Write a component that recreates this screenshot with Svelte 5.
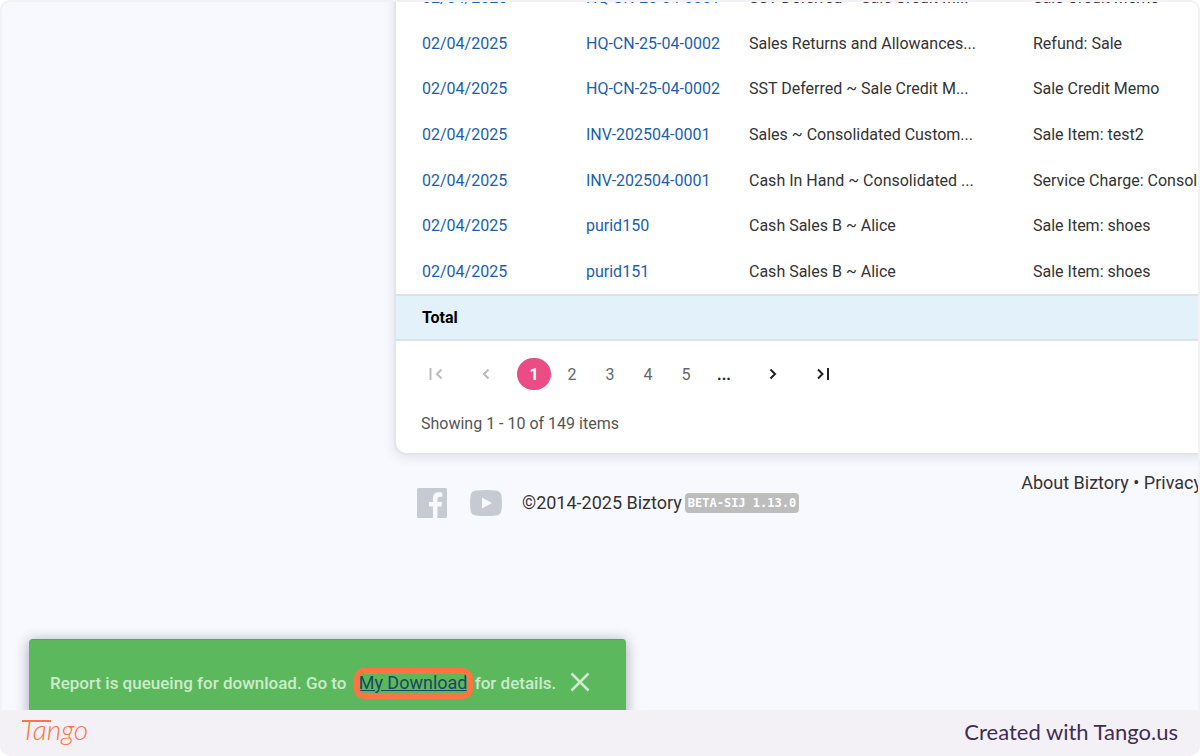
<script>
  const rows = [
    { date: '02/04/2025', ref: 'HQ-CN-25-04-0001', account: 'SST Deferred ~ Sale Credit M...', details: 'Sale Credit Memo' },
    { date: '02/04/2025', ref: 'HQ-CN-25-04-0002', account: 'Sales Returns and Allowances...', details: 'Refund: Sale' },
    { date: '02/04/2025', ref: 'HQ-CN-25-04-0002', account: 'SST Deferred ~ Sale Credit M...', details: 'Sale Credit Memo' },
    { date: '02/04/2025', ref: 'INV-202504-0001', account: 'Sales ~ Consolidated Custom...', details: 'Sale Item: test2' },
    { date: '02/04/2025', ref: 'INV-202504-0001', account: 'Cash In Hand ~ Consolidated ...', details: 'Service Charge: Consolidated' },
    { date: '02/04/2025', ref: 'purid150', account: 'Cash Sales B ~ Alice', details: 'Sale Item: shoes' },
    { date: '02/04/2025', ref: 'purid151', account: 'Cash Sales B ~ Alice', details: 'Sale Item: shoes' },
  ]

  const pages = [1, 2, 3, 4, 5]
  let currentPage = $state(1)
  let showToast = $state(true)
</script>

<div class="frame">
  <div class="capture">
    <main>
      <section class="card">
        <table>
          <colgroup>
            <col class="col-date">
            <col class="col-ref">
            <col class="col-account">
            <col>
          </colgroup>
          <tbody>
            {#each rows as row}
              <tr>
                <td><a href="#date">{row.date}</a></td>
                <td><a href="#ref">{row.ref}</a></td>
                <td>{row.account}</td>
                <td>{row.details}</td>
              </tr>
            {/each}
          </tbody>
          <tfoot>
            <tr><td colspan="4">Total</td></tr>
          </tfoot>
        </table>

        <nav class="pager" aria-label="Pages">
          <button class="arrow" disabled aria-label="First page">
            <svg width="16" height="16" viewBox="0 0 16 16"><path d="M2.500 2v12M13.500 3.500 9 8l4.500 4.500" /></svg>
          </button>
          <button class="arrow" disabled aria-label="Previous page">
            <svg width="16" height="16" viewBox="0 0 16 16"><path d="M10.500 3.500 6 8l4.500 4.500" /></svg>
          </button>
          <div class="pages">
            {#each pages as page}
              <button class="page" class:current={page === currentPage} onclick={() => currentPage = page}>{page}</button>
            {/each}
            <button class="page more">...</button>
          </div>
          <button class="arrow" aria-label="Next page">
            <svg width="16" height="16" viewBox="0 0 16 16"><path d="M5.500 3.500 10 8l-4.500 4.500" /></svg>
          </button>
          <button class="arrow" aria-label="Last page">
            <svg width="16" height="16" viewBox="0 0 16 16"><path d="M3 3.500 7.500 8 3 12.500M13 2v12" /></svg>
          </button>
        </nav>

        <p class="summary">Showing 1 - 10 of 149 items</p>
      </section>

      <footer class="site-footer">
        <div class="brand">
          <a class="facebook" href="#facebook" aria-label="Facebook">
            <svg width="30" height="30" viewBox="0 0 30 30">
              <path fill="#c5cad3" d="M1.500 0h27A1.500 1.500 0 0 1 30 1.500v27a1.500 1.500 0 0 1-1.500 1.500H20.500V18.500h4l.6-4.500h-4.600v-3c0-1.500.6-2.300 2.300-2.300h2.500V4.500c-.7-.1-2-.2-3.500-.2-3.600 0-5.800 2-5.800 6V14H12v4.500h4V30H1.500A1.500 1.500 0 0 1 0 28.500v-27A1.500 1.500 0 0 1 1.500 0z" />
            </svg>
          </a>
          <a class="youtube" href="#youtube" aria-label="YouTube">
            <svg width="32" height="26" viewBox="0 0 32 26">
              <path fill="#c5cad3" d="M6 .5Q16-.5 26 .5 31 1 31.500 6q.8 7 0 14-.5 5-5.500 5.500-10 1-20 0Q1 25 .5 20-.3 13 .5 6 1 1 6 .5z" />
              <path fill="#f8f9fe" d="M12 7.500v11l10-5.500z" />
            </svg>
          </a>
          <span>©2014-2025 Biztory</span>
          <code class="version">BETA-SIJ 1.13.0</code>
        </div>
        <div class="links">
          <a href="#about">About Biztory</a> • <a href="#privacy">Privacy</a>
        </div>
      </footer>
    </main>

    {#if showToast}
      <div class="toast" role="status">
        <p>Report is queueing for download. Go to <a href="#downloads">My Download</a> for details.</p>
        <button aria-label="Close" onclick={() => showToast = false}>
          <svg width="20" height="20" viewBox="0 0 20 20"><path d="m1.500 1.500 17 17m0-17-17 17" /></svg>
        </button>
      </div>
    {/if}
  </div>

  <footer class="credit">
    <svg class="logo" width="76" height="46" viewBox="0 0 76 46" role="img" aria-label="Tango">
      <text x="1" y="30">Tango</text>
      <path d="M2 11h29" />
    </svg>
    <span>Created with Tango.us</span>
  </footer>
</div>

<style>
  :global(body) {
    margin: 0;
    background: #fff;
  }
  .frame {
    box-sizing: border-box;
    display: flex;
    flex-direction: column;
    height: 100vh;
    padding: 2px 2px 0;
    border-radius: 10px;
    overflow: hidden;
    background: #f3f1f6;
    font-family: Roboto, sans-serif;
    color: #333;
  }
  .capture {
    position: relative;
    flex: 1;
    min-height: 0;
    overflow: hidden;
    border-radius: 8px 8px 0 0;
    background: #f8f9fe;
  }
  main {
    margin: -27px 0 0 392px;
  }
  a {
    color: inherit;
    text-decoration: none;
  }
  button {
    padding: 0;
    border: 0;
    background: none;
    font: inherit;
    color: inherit;
    cursor: pointer;
  }

  /* ---- report table ---- */
  .card {
    box-sizing: border-box;
    height: 480px;
    margin-right: -40px;
    border: 2px solid #e3e4e8;
    border-top: 0;
    border-radius: 0 0 12px 12px;
    background: #fff;
    box-shadow: 0 2px 12px rgba(60, 60, 80, 0.12);
    font-size: 16px;
  }
  table {
    width: 100%;
    height: 366px;
    table-layout: fixed;
    border-collapse: separate;
    border-spacing: 0;
  }
  .col-date {
    width: 190px;
  }
  .col-ref {
    width: 163px;
  }
  .col-account {
    width: 284px;
  }
  td {
    padding: 0;
    white-space: nowrap;
    overflow: hidden;
  }
  td:first-child {
    padding-left: 26px;
  }
  td a {
    color: #1a5fae;
  }
  tfoot td {
    box-sizing: border-box;
    height: 47px;
    border-top: 2px solid #dfe2e4;
    border-bottom: 2px solid #dfe2e4;
    background: #e3f2fa;
    font-weight: 700;
    color: #000;
  }

  /* ---- pager ---- */
  .pager {
    display: flex;
    align-items: center;
    height: 36px;
    margin: 15px 0 0 15px;
  }
  .arrow {
    width: 50px;
    height: 36px;
    color: #222;
  }
  .arrow:disabled {
    color: #bbb;
  }
  .arrow svg {
    display: block;
    margin: 0 auto;
    fill: none;
    stroke: currentColor;
    stroke-width: 2;
  }
  .pages {
    display: flex;
    gap: 4px;
    margin: 0 7px 0 6px;
  }
  .page {
    width: 34px;
    height: 32px;
    color: #666;
  }
  .page.current {
    border-radius: 16px;
    background: #ea4c84;
    color: #fff;
    font-weight: 700;
  }
  .page.more {
    color: #222;
    font-weight: 700;
  }
  .summary {
    margin: 22px 0 0 25px;
    line-height: 20px;
    color: #555;
  }

  /* ---- site footer ---- */
  .site-footer {
    display: flex;
    justify-content: space-between;
    align-items: flex-start;
    margin-right: -4px;
    padding: 17px 0 0 23px;
    font-size: 18px;
    line-height: 22px;
    white-space: nowrap;
  }
  .brand {
    display: flex;
    align-items: center;
    padding-top: 16px;
  }
  .brand svg {
    display: block;
  }
  .facebook {
    margin-right: 23px;
  }
  .youtube {
    margin-right: 20px;
  }
  .version {
    margin-left: 3px;
    padding: 0 3px;
    border-radius: 4px;
    background: #bdbdbd;
    font: 700 12px/20px "DejaVu Sans Mono", monospace;
    color: #fff;
  }

  /* ---- toast ---- */
  .toast {
    position: absolute;
    left: 27px;
    bottom: -14px;
    box-sizing: border-box;
    display: flex;
    align-items: center;
    height: 85px;
    width: 597px;
    padding-left: 21px;
    border-top: 1px solid #43b143;
    border-radius: 4px;
    background: #5cb85c;
    box-shadow: 0 2px 14px rgba(40, 40, 60, 0.4);
    font-size: 17px;
    font-weight: 500;
    color: #cdeacd;
    white-space: nowrap;
  }
  .toast p {
    margin: 0;
  }
  .toast a {
    position: relative;
    margin: 0 3px 0 8px;
    font-size: 18px;
    font-weight: 400;
    color: #1d4663;
    text-decoration: underline;
  }
  .toast a::after {
    content: '';
    position: absolute;
    inset: -4px -5px -6px;
    border: 6px solid #ff7442;
    border-radius: 10px;
  }
  .toast button {
    margin-left: 14px;
  }
  .toast svg {
    display: block;
    fill: none;
    stroke: currentColor;
    stroke-width: 2.500;
  }

  /* ---- credit bar ---- */
  .credit {
    display: flex;
    justify-content: space-between;
    align-items: center;
    height: 46px;
    padding: 0 20px 0 18px;
    font-family: Lato, sans-serif;
    font-size: 22px;
    line-height: 26px;
    color: #3f2d54;
  }
  .credit span {
    padding-bottom: 2px;
  }
  .logo text {
    font: italic 300 28px Lato, sans-serif;
    fill: #ff7442;
  }
  .logo path {
    stroke: #ff7442;
    stroke-width: 2;
  }
</style>
